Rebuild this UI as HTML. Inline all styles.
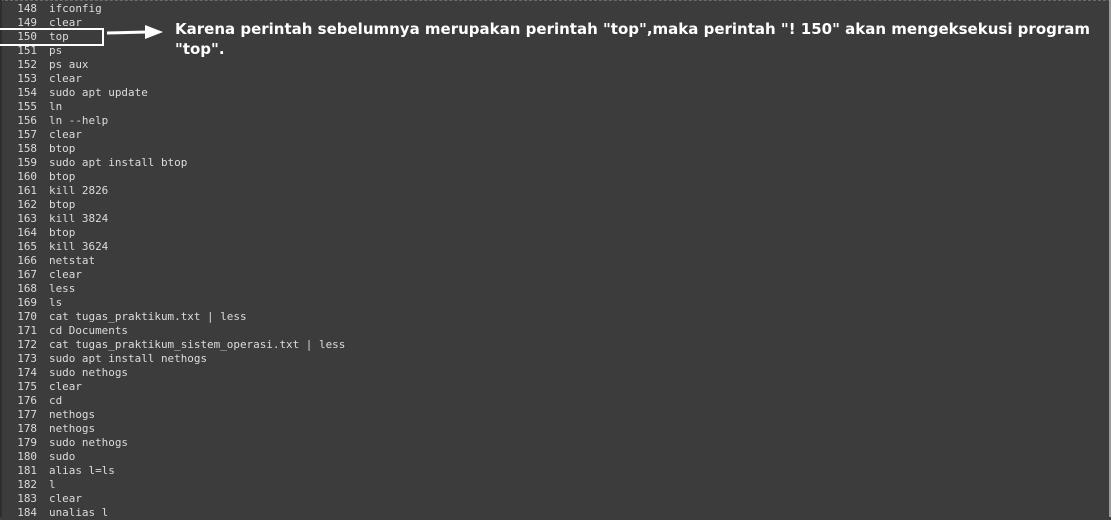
<!DOCTYPE html>
<html><head><meta charset="utf-8"><style>
html,body{margin:0;padding:0;}
body{width:1111px;height:517px;background:#3c3c3c;position:relative;overflow:hidden;}
.top{position:absolute;left:0;top:0;width:1111px;height:0;border-top:1px dashed #6a6a6a;}
.rb{position:absolute;right:0;top:0;width:2px;height:517px;background:#9a9a9a;}
.lb{position:absolute;left:0;top:0;width:2px;height:517px;background:#2e2e2e;}
pre{position:absolute;left:0;top:2px;margin:0;font-family:"DejaVu Sans Mono","Liberation Mono",monospace;font-size:10.95px;line-height:14px;color:#dcdcdc;}
.n{display:inline-block;width:37px;text-align:right;margin-right:12px;}
.box{position:absolute;left:-2px;top:28px;width:102px;height:14px;border:2px solid #fff;}
.txt{position:absolute;left:175px;top:19px;width:930px;font-family:"DejaVu Sans","Liberation Sans",sans-serif;font-weight:bold;font-size:15px;line-height:20px;color:#fff;}
</style></head><body>
<div class="top"></div><div class="lb"></div><div class="rb"></div>
<pre><span class="n">148</span>ifconfig
<span class="n">149</span>clear
<span class="n">150</span>top
<span class="n">151</span>ps
<span class="n">152</span>ps aux
<span class="n">153</span>clear
<span class="n">154</span>sudo apt update
<span class="n">155</span>ln
<span class="n">156</span>ln --help
<span class="n">157</span>clear
<span class="n">158</span>btop
<span class="n">159</span>sudo apt install btop
<span class="n">160</span>btop
<span class="n">161</span>kill 2826
<span class="n">162</span>btop
<span class="n">163</span>kill 3824
<span class="n">164</span>btop
<span class="n">165</span>kill 3624
<span class="n">166</span>netstat
<span class="n">167</span>clear
<span class="n">168</span>less
<span class="n">169</span>ls
<span class="n">170</span>cat tugas_praktikum.txt | less
<span class="n">171</span>cd Documents
<span class="n">172</span>cat tugas_praktikum_sistem_operasi.txt | less
<span class="n">173</span>sudo apt install nethogs
<span class="n">174</span>sudo nethogs
<span class="n">175</span>clear
<span class="n">176</span>cd
<span class="n">177</span>nethogs
<span class="n">178</span>nethogs
<span class="n">179</span>sudo nethogs
<span class="n">180</span>sudo
<span class="n">181</span>alias l=ls
<span class="n">182</span>l
<span class="n">183</span>clear
<span class="n">184</span>unalias l</pre>
<div class="box"></div>
<svg style="position:absolute;left:105px;top:24px" width="60" height="20"><line x1="2" y1="9" x2="42" y2="8" stroke="#fff" stroke-width="3"/><polygon points="40,1 58,8 40,15" fill="#fff"/></svg>
<div class="txt">Karena perintah sebelumnya merupakan perintah "top",maka perintah "! 150" akan mengeksekusi program "top".</div>
</body></html>
